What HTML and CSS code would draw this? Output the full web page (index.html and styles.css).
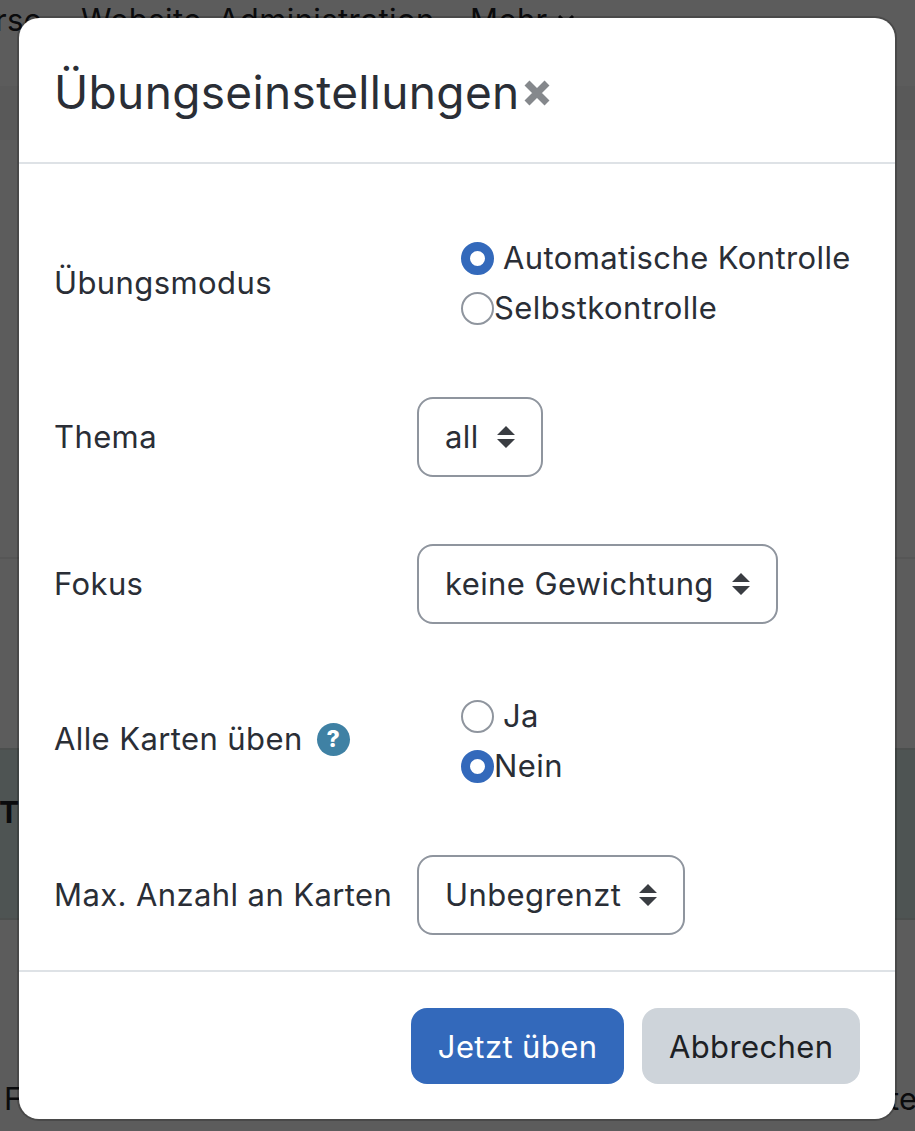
FILE: index.html
```html
<!DOCTYPE html>
<html lang="de">
<head>
<meta charset="utf-8">
<title>Übungseinstellungen</title>
<link rel="stylesheet" href="styles.css">
</head>
<body>
<div class="page">
  <nav class="nav"><span class="nav-a">rse</span><span class="nav-b">Website</span><span class="nav-c">Administration</span><span class="nav-d">Mehr</span><svg class="nav-chev" viewBox="0 0 16 10"><path d="M1 1L8 8L15 1"/></svg></nav>
  <div class="band-top"></div>
  <div class="rule-a"></div>
  <div class="table-band"><b class="t-head">Ti</b></div>
  <div class="foot-text"><span>F</span><span>te</span></div>
</div>
<div class="backdrop"></div>
<div class="modal" role="dialog">
  <header class="modal-head">
    <h1 class="modal-title">Übungseinstellungen</h1>
    <svg class="close" viewBox="0 0 26 26" aria-label="Schließen"><path d="M3 3L23 23M23 3L3 23"/></svg>
  </header>
  <form class="modal-body">
    <div class="row row-radio">
      <div class="label">Übungsmodus</div>
      <div class="radios">
        <div class="radio"><span class="dot on"></span><span class="radio-gap">Automatische Kontrolle</span></div>
        <div class="radio"><span class="dot"></span><span>Selbstkontrolle</span></div>
      </div>
    </div>
    <div class="row row-s2">
      <div class="label">Thema</div>
      <div class="select">all<svg class="updown" viewBox="0 0 18 22"><path d="M9 0L18 9H0ZM9 22L0 13H18Z"/></svg></div>
    </div>
    <div class="row row-s3">
      <div class="label">Fokus</div>
      <div class="select">keine Gewichtung<svg class="updown" viewBox="0 0 18 22"><path d="M9 0L18 9H0ZM9 22L0 13H18Z"/></svg></div>
    </div>
    <div class="row row-radio row-r4">
      <div class="label label-help">Alle Karten üben<span class="help">?</span></div>
      <div class="radios">
        <div class="radio"><span class="dot"></span><span class="radio-gap">Ja</span></div>
        <div class="radio"><span class="dot on"></span><span>Nein</span></div>
      </div>
    </div>
    <div class="row row-s5">
      <div class="label">Max. Anzahl an Karten</div>
      <div class="select">Unbegrenzt<svg class="updown" viewBox="0 0 18 22"><path d="M9 0L18 9H0ZM9 22L0 13H18Z"/></svg></div>
    </div>
  </form>
  <footer class="modal-foot">
    <button class="btn primary" type="button">Jetzt üben</button>
    <button class="btn secondary" type="button">Abbrechen</button>
  </footer>
</div>
</body>
</html>
```
FILE: styles.css
```css
* { box-sizing: border-box; }
html, body { margin: 0; height: 100%; }
body {
  width: 915px;
  height: 1131px;
  overflow: hidden;
  position: relative;
  background: #fff;
  font-family: Inter, "Noto Sans", sans-serif;
  color: #2a2e36;
}
.page { height: 1131px; display: flex; flex-direction: column; }
.nav {
  height: 86px;
  font-size: 31px;
  line-height: 40px;
  letter-spacing: .4px;
  display: flex;
  color: #1d2125;
  white-space: nowrap;
}
.nav-a { margin-left: -5px; width: 86px; }
.nav-b { width: 137px; }
.nav-c { width: 252px; }
.nav-d { width: 88px; }
.nav-chev { width: 16px; height: 10px; margin-top: 15px; }
.nav-chev path { fill: none; stroke: #1d2125; stroke-width: 3; }
.band-top { height: 54px; background: #f7f7f7; }
.rule-a { height: 2px; margin-top: 417px; background: #eee; }
.table-band {
  height: 172px;
  margin-top: 189px;
  background: #d8e8e6;
  border-top: 2px solid #d2dbd9;
  border-bottom: 2px solid #d2dbd9;
  font-size: 30px;
  color: #1d2125;
  padding-top: 44px;
}
.t-head { margin-left: -1px; }
.foot-text {
  display: flex;
  justify-content: space-between;
  font-size: 31px;
  color: #1d2125;
  margin-top: 160px;
  padding: 0 0 0 4px;
}
.foot-text span:last-child { margin-right: -2px; }
.backdrop { position: absolute; inset: 0; background: rgba(0, 0, 0, .64); }
.modal {
  position: absolute;
  left: 19px;
  top: 18px;
  width: 876px;
  height: 1101px;
  background: #fff;
  border-radius: 20px;
  box-shadow: 0 0 0 2px rgba(0, 0, 0, .2);
  display: flex;
  flex-direction: column;
}
.modal-head {
  height: 146px;
  flex: none;
  border-bottom: 2px solid #dee2e6;
  padding: 4px 35px 0;
  display: flex;
  align-items: center;
}
.modal-title {
  margin: 0;
  font-size: 46px;
  font-weight: 400;
  line-height: 54px;
  color: #2a2e36;
  letter-spacing: .35px;
}
.close { width: 26px; height: 26px; margin: 2px 0 0 4px; flex: none; }
.close path { stroke: #85888c; stroke-width: 7; fill: none; }
.modal-body {
  flex: 1;
  padding: 69px 35px 0;
  font-size: 31px;
  line-height: 50px;
  letter-spacing: .4px;
}
.row { display: flex; align-items: center; }
.label { width: 363px; flex: none; display: flex; align-items: center; }
.label-help { padding-bottom: 4px; }
.row-radio { height: 100px; }
.row-s2 { margin-top: 64px; }
.row-s3 { margin-top: 67px; }
.row-r4 { margin-top: 67px; }
.row-s5 { margin-top: 64px; }
.radios { padding-left: 44px; }
.radio { display: flex; align-items: center; height: 50px; }
.dot {
  width: 33px;
  height: 33px;
  flex: none;
  border-radius: 50%;
  border: 2px solid #8f959e;
  background: #fff;
}
.dot.on { border: 9px solid #3369bb; }
.radio-gap { margin-left: 9px; }
.select {
  height: 80px;
  border: 2px solid #8f959e;
  border-radius: 16px;
  padding: 0 26px;
  display: flex;
  align-items: center;
}
.updown { width: 18px; height: 22px; margin-left: 18px; fill: #3a3d42; }
.help {
  width: 33px;
  height: 33px;
  border-radius: 50%;
  background: #3f81a4;
  color: #fff;
  font-size: 23px;
  font-weight: 800;
  line-height: 33px;
  text-align: center;
  margin-left: 14px;
  letter-spacing: 0;
}
.modal-foot {
  height: 149px;
  flex: none;
  border-top: 2px solid #dee2e6;
  display: flex;
  justify-content: flex-end;
  gap: 18px;
  padding: 36px 35px 0;
}
.btn {
  height: 76px;
  border: 0;
  border-radius: 16px;
  font: inherit;
  font-size: 31px;
  letter-spacing: .4px;
  padding: 0 27px;
}
.primary { background: #3369bb; color: #fff; }
.secondary { background: #ced4da; color: #1d2125; padding: 0 26.5px; }
```
